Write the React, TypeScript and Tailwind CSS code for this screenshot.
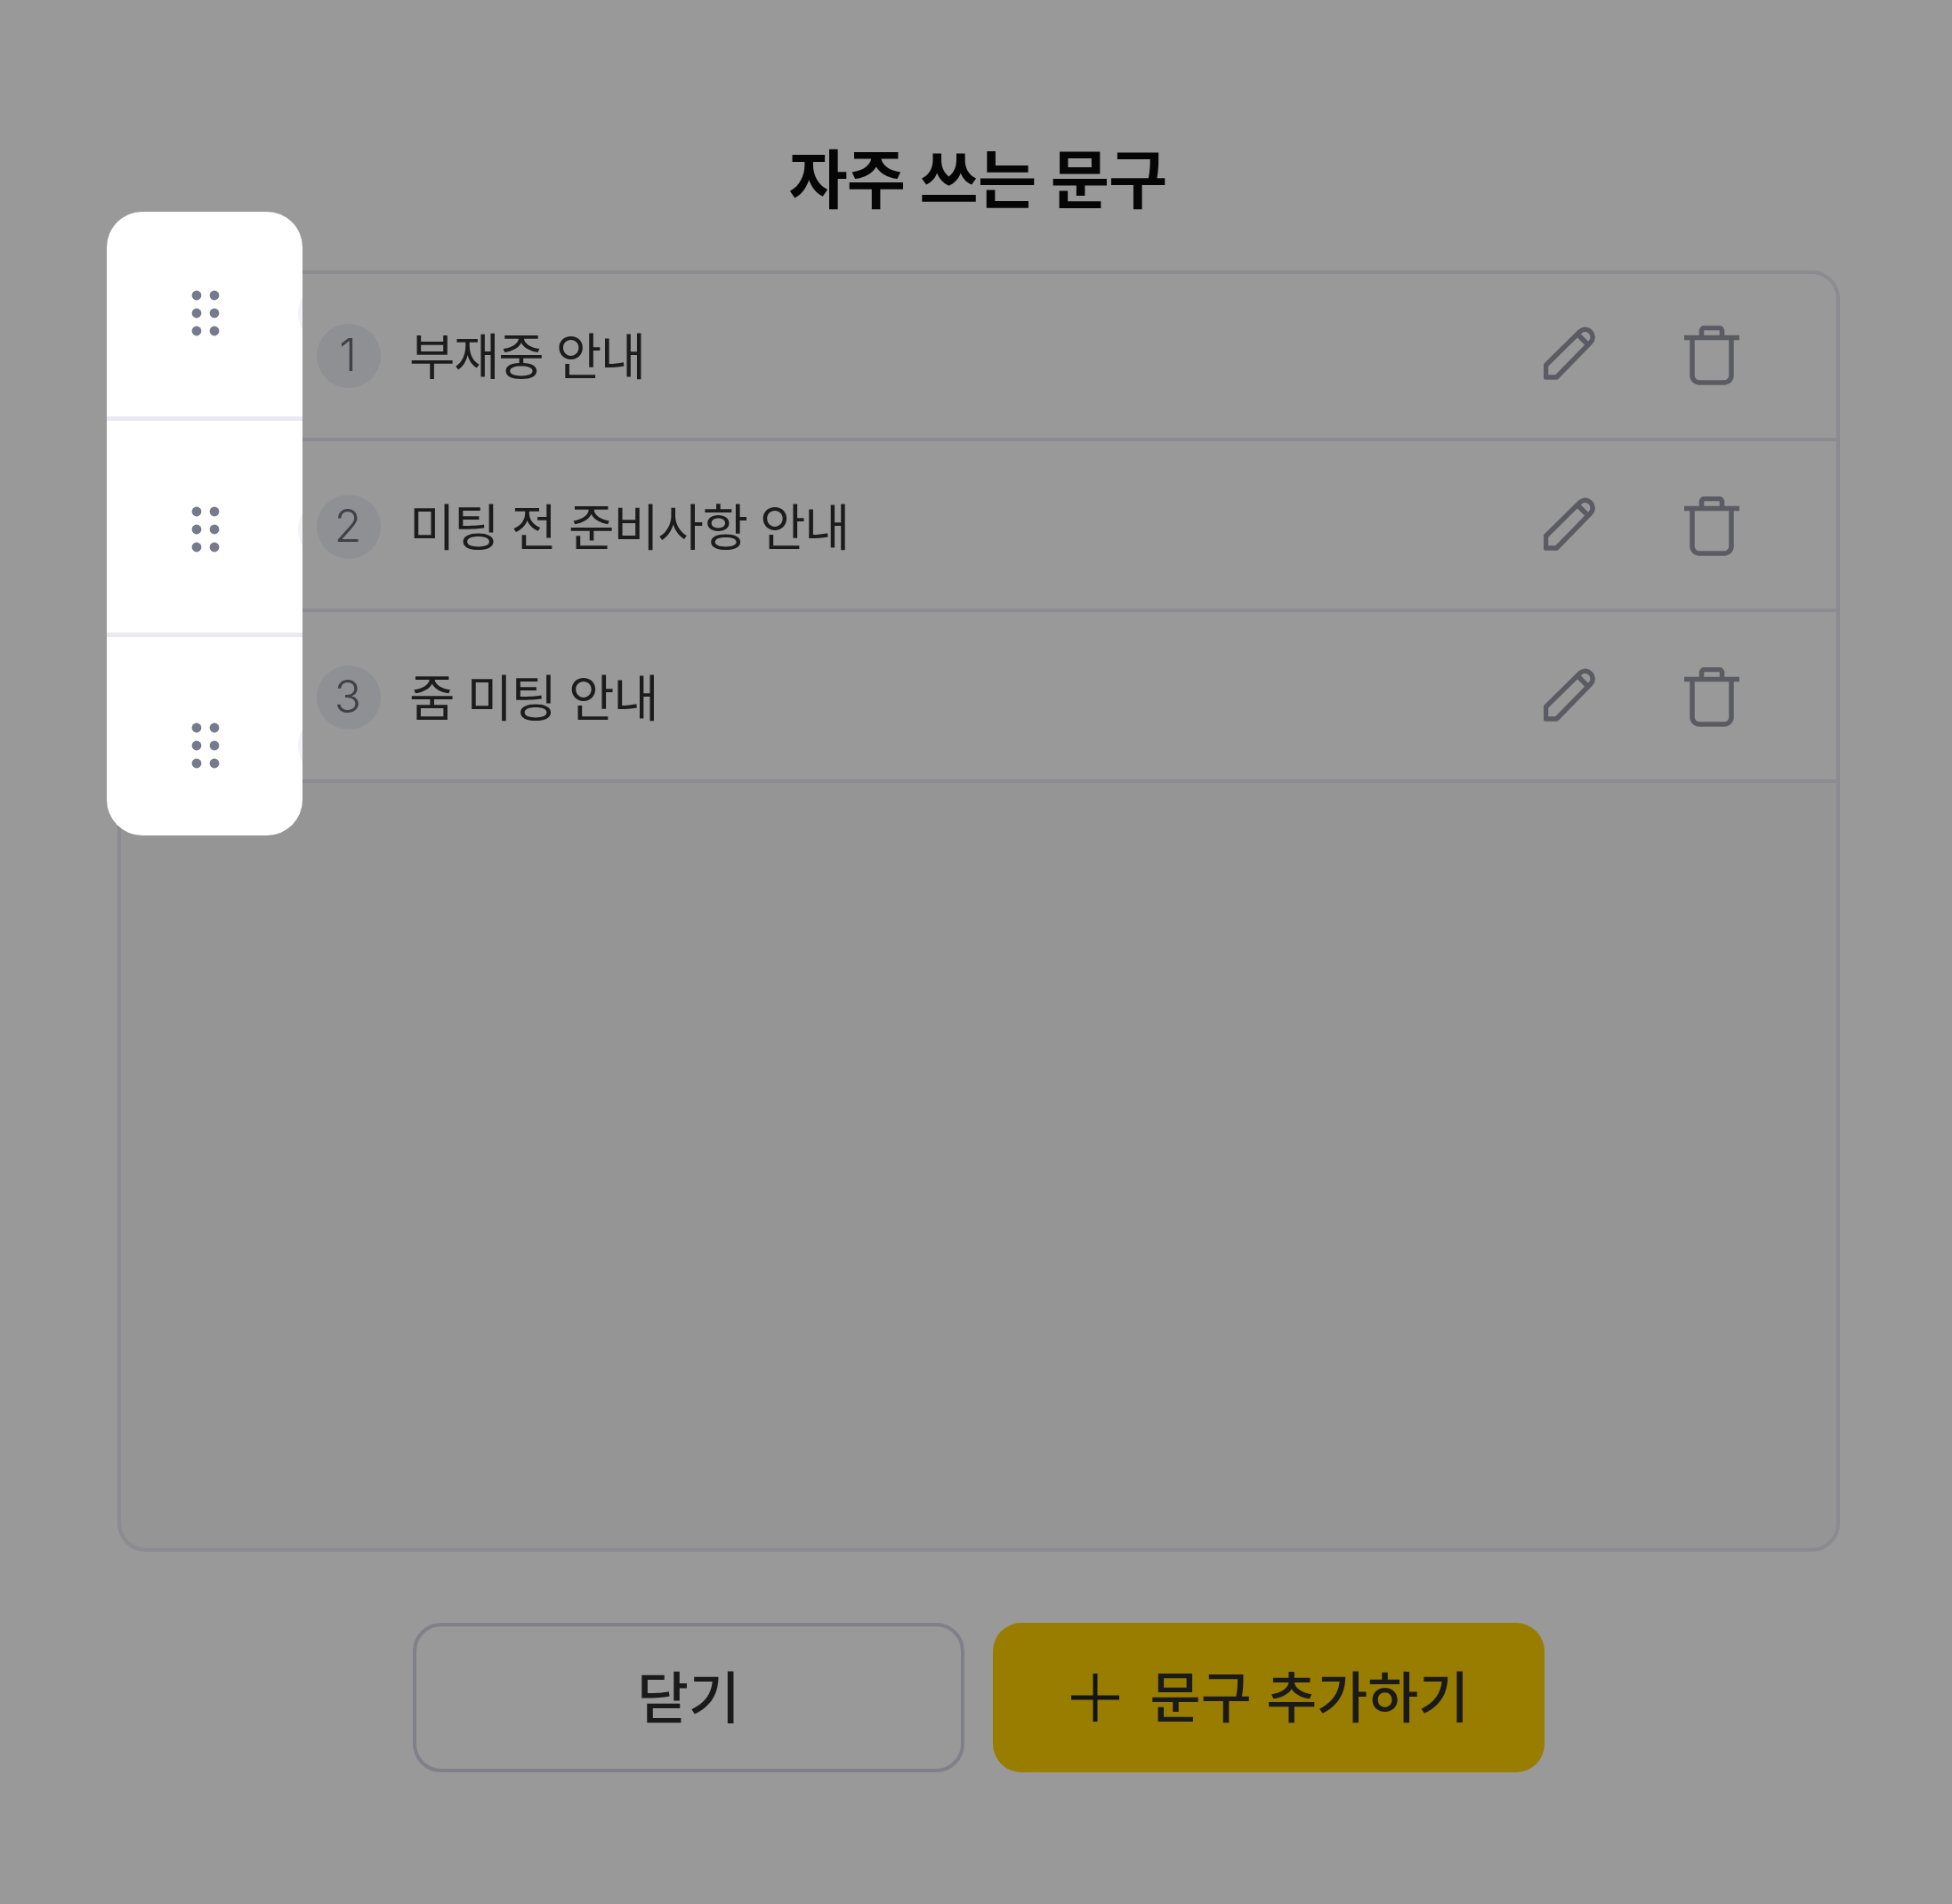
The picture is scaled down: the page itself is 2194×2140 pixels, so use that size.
const font = "font-['Inter','Noto_Sans_CJK_KR',sans-serif]";

function Pencil() {
  return (
    <svg width="60" height="60" viewBox="0 0 60 60" fill="none" stroke="#5b5b63" strokeWidth="5.5" strokeLinejoin="round" className="-translate-y-[3px]">
      <path d="M2.5 57 V43.5 L41 5.5 A8.5 8.5 0 0 1 53 17.5 L14.5 57 Z" />
      <path d="M38 8.5 L50 20.5" />
    </svg>
  );
}

function Trash() {
  return (
    <svg width="62" height="67" viewBox="0 0 62 67" fill="none" stroke="#5b5b63" strokeWidth="5.5" className="-translate-y-px">
      <path d="M0 13.5 H62" />
      <path d="M19.5 13 V5.5 A3.5 3.5 0 0 1 23 2.5 H39 A3.5 3.5 0 0 1 42.5 5.5 V13" />
      <path d="M9 13 V56 A8 8 0 0 0 17 64 H45 A8 8 0 0 0 53 56 V13" />
    </svg>
  );
}

function Dots() {
  return (
    <svg width="32" height="52" viewBox="0 0 32 52" fill="#777a8c">
      {[6, 26, 46].map((y) => (
        <g key={y}>
          <circle cx="6" cy={y} r="5.4" />
          <circle cx="26" cy={y} r="5.4" />
        </g>
      ))}
    </svg>
  );
}

const rows = [
  { n: 1, label: "부재중 안내" },
  { n: 2, label: "미팅 전 준비사항 안내" },
  { n: 3, label: "줌 미팅 안내" },
];

const handles = [
  { h: "h-[235px]", pt: "pt-[88px]", border: true },
  { h: "h-[243px]", pt: "pt-[96px]", border: true },
  { h: "h-[223px]", pt: "pt-[96px]", border: false },
];

export default function App() {
  return (
    <div className={`relative w-[2194px] h-[2140px] overflow-hidden bg-[#999999] pl-[132px] pr-[126px] ${font}`}>
      <h1 className="h-[304px] pt-[156px] pr-[2px] text-center text-[72px] leading-[92px] font-bold tracking-[-0.8px] text-[#050505]">자주 쓰는 문구</h1>

      <div className="h-[1440px] rounded-[32px] border-4 border-[#8b8b90] bg-[#959595] overflow-hidden">
        <div className="flex flex-col gap-1 bg-[#999999]">
          {rows.map((r) => (
            <div key={r.n} className="flex h-[188px] items-center border-b-4 border-[#8b8b90] pl-[220px] pr-[109px]">
              <span className="flex h-[72px] w-[72px] shrink-0 items-center justify-center rounded-full bg-[#8f9094] pr-[2px] pb-[2px] text-[50px] font-light text-[#3f4048]">
                {r.n}
              </span>
              <span className="ml-[32px] pt-[2px] text-[56px] leading-[72px] tracking-[-1.4px] text-[#1c1c1c]">{r.label}</span>
              <div className="ml-auto flex items-center gap-[98px]">
                <Pencil />
                <Trash />
              </div>
            </div>
          ))}
        </div>
      </div>

      <div className="mt-[80px] flex justify-center gap-8">
        <button className="flex h-[168px] w-[620px] items-center justify-center rounded-[32px] border-4 border-[#808088] text-[63px] font-medium text-[#1a1a1a]">
          닫기
        </button>
        <button className="flex h-[168px] w-[620px] items-center justify-center gap-[34px] rounded-[32px] bg-[#997d00] pl-[2px] text-[62px] font-medium text-[#1a1a1a]">
          <svg width="56" height="56" viewBox="0 0 56 56" fill="none" stroke="#141414" strokeWidth="5">
            <path d="M28 1 V55 M1 28 H55" />
          </svg>
          문구 추가하기
        </button>
      </div>

      <div className="absolute left-[120px] top-[238px] w-[220px] overflow-hidden rounded-[40px] bg-white">
        {handles.map((p, i) => (
          <div key={i} className={`relative flex justify-center pl-[2px] ${p.h} ${p.pt} ${p.border ? "border-b-[5px] border-[#e9e9f2]" : ""}`}>
            <Dots />
          </div>
        ))}
        <span className="absolute left-[215px] top-[78px] h-[72px] w-[72px] rounded-full bg-[#f2f2f7]" />
        <span className="absolute left-[215px] top-[321px] h-[72px] w-[72px] rounded-full bg-[#f2f2f7]" />
        <span className="absolute left-[215px] top-[564px] h-[72px] w-[72px] rounded-full bg-[#f2f2f7]" />
      </div>
    </div>
  );
}
